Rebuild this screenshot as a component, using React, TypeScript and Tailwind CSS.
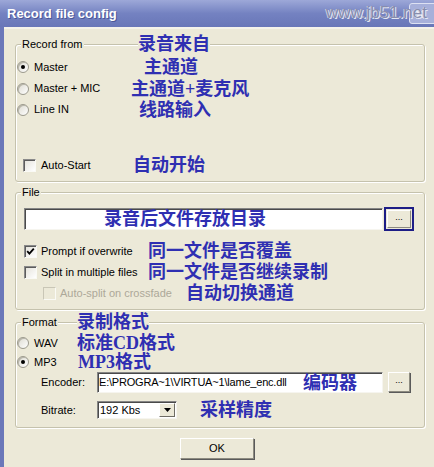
import React from "react";

const NOTE =
  "font-bold text-[18px] leading-none text-[#2f2fb2] [font-family:'Liberation_Serif','Noto_Sans_CJK_SC',serif] whitespace-nowrap";

function Radio({ checked }: { checked?: boolean }) {
  return (
    <span className="w-[12px] h-[12px] shrink-0 rounded-full border border-[#9c9a8e] bg-gradient-to-br from-[#dcdad0] to-white shadow-[inset_1px_1px_0_#b8b6aa] flex items-center justify-center">
      {checked && <span className="w-[4px] h-[4px] rounded-full bg-black" />}
    </span>
  );
}

function Check({ checked, disabled }: { checked?: boolean; disabled?: boolean }) {
  return (
    <span
      className={
        disabled
          ? "w-[13px] h-[13px] shrink-0 border border-t-[#c9c6b6] border-l-[#c9c6b6] border-r-[#fafaf5] border-b-[#fafaf5] bg-[#ECE9D8]"
          : "w-[13px] h-[13px] shrink-0 border border-t-[#8a8a8a] border-l-[#8a8a8a] border-r-[#fafaf5] border-b-[#fafaf5] bg-gradient-to-br from-[#e4e2da] to-white shadow-[inset_1px_1px_0_#5c5c5c] flex items-center justify-center"
      }
    >
      {checked && (
        <svg width="9" height="9" viewBox="0 0 9 9">
          <path d="M1.2 4.2 L3.4 6.6 L7.8 1.6" stroke="#000" strokeWidth="1.8" fill="none" />
        </svg>
      )}
    </span>
  );
}

function Group({
  className,
  header,
  children,
}: {
  className: string;
  header: React.ReactNode;
  children: React.ReactNode;
}) {
  return (
    <div
      className={`w-[410px] border border-[#c5c2ad] rounded-[3px] shadow-[inset_1px_1px_0_#fff,1px_1px_0_#fff] ${className}`}
    >
      <div className="-mt-[13px] h-[24px] flex items-center pl-[5px]">{header}</div>
      {children}
    </div>
  );
}

function SmallButton({ className }: { className: string }) {
  return (
    <div
      className={`bg-[#ECE9D8] border border-t-white border-l-white border-r-[#8d8b80] border-b-[#8d8b80] shadow-[1px_1px_0_#5a5a5a] flex items-center justify-center text-[9px] leading-none pb-[3px] ${className}`}
    >
      ...
    </div>
  );
}

export default function App() {
  return (
    <div className="w-[434px] h-[467px] overflow-hidden bg-[#ECE9D8] flex flex-col [font-family:'Liberation_Sans',Arial,sans-serif] text-[11px] text-black">
      {/* Title bar */}
      <div className="relative h-[27px] shrink-0 bg-gradient-to-b from-[#9da8d8] via-[#7482c1] to-[#6876b8] flex items-center pl-[7px]">
        <span className="text-white font-bold text-[13px] leading-none [text-shadow:1px_1px_0_#4a5698]">
          Record file config
        </span>
        <div className="absolute left-[409px] top-[3px] w-[30px] h-[21px] rounded-[3px] bg-[#a7b0da] border border-[#dde1f2] flex items-center justify-center">
          <svg width="10" height="10" viewBox="0 0 10 10" className="-ml-[8px]">
            <path d="M1 1 L9 9 M9 1 L1 9" stroke="#ffffff" strokeWidth="2" opacity="0.85" />
          </svg>
        </div>
        <span className="absolute right-[7px] top-[3px] text-[17px] leading-[20px] text-[#878dad] [text-shadow:1px_1px_0_#e4e7f3,-1px_0_0_#c9cde6]">
          www.jb51.net
        </span>
      </div>

      <div className="flex flex-1">
        <div className="w-[4px] bg-[#6b78b9] shrink-0" />
        <div className="flex-1 flex flex-col pl-[11px] border-t-2 border-[#f4f2ea]">
          {/* Record from */}
          <Group
            className="mt-[15px]"
            header={
              <>
                <span className="w-[117px] shrink-0">
                  <span className="bg-[#ECE9D8] px-[1px]">Record from</span>
                </span>
                <span className={`${NOTE} bg-[#ECE9D8]`}>录音来自</span>
              </>
            }
          >
            <div className="h-[22px] flex items-center pl-[1px]">
              <span className="w-[127px] shrink-0 flex items-center gap-[5px]">
                <Radio checked />
                <span>Master</span>
              </span>
              <span className={NOTE}>主通道</span>
            </div>
            <div className="h-[21px] flex items-center pl-[1px]">
              <span className="w-[114px] shrink-0 flex items-center gap-[5px]">
                <Radio />
                <span>Master + MIC</span>
              </span>
              <span className={NOTE}>主通道+麦克风</span>
            </div>
            <div className="h-[21px] flex items-center pl-[1px]">
              <span className="w-[122px] shrink-0 flex items-center gap-[5px]">
                <Radio />
                <span>Line IN</span>
              </span>
              <span className={NOTE}>线路输入</span>
            </div>
            <div className="h-[35px]" />
            <div className="h-[20px] flex items-center pl-[7px]">
              <span className="w-[110px] shrink-0 flex items-center gap-[5px]">
                <Check />
                <span>Auto-Start</span>
              </span>
              <span className={NOTE}>自动开始</span>
            </div>
            <div className="h-[6px]" />
          </Group>

          {/* File */}
          <Group
            className="mt-[10px]"
            header={<span className="bg-[#ECE9D8] px-[1px]">File</span>}
          >
            <div className="mt-[3px] h-[24px] flex items-start pl-[8px]">
              <div className="mt-[1px] w-[359px] h-[22px] bg-white border border-t-[#858585] border-l-[#858585] border-r-[#f6f5ef] border-b-[#f6f5ef] shadow-[inset_1px_1px_0_#4a4a4a] flex items-center pl-[79px]">
                <span className={NOTE}>录音后文件存放目录</span>
              </div>
              <div className="ml-[1px] w-[30px] h-[24px] border-2 border-[#1d1d86] p-[1px] flex">
                <SmallButton className="flex-1 shadow-none border-r-[#6e6c64] border-b-[#6e6c64]" />
              </div>
            </div>
            <div className="h-[10px]" />
            <div className="h-[20px] flex items-center pl-[8px]">
              <span className="w-[124px] shrink-0 flex items-center gap-[4px]">
                <Check checked />
                <span>Prompt if overwrite</span>
              </span>
              <span className={NOTE}>同一文件是否覆盖</span>
            </div>
            <div className="h-[22px] flex items-center pl-[8px]">
              <span className="w-[124px] shrink-0 flex items-center gap-[4px]">
                <Check />
                <span>Split in multiple files</span>
              </span>
              <span className={NOTE}>同一文件是否继续录制</span>
            </div>
            <div className="h-[20px] flex items-center pl-[27px]">
              <span className="w-[143px] shrink-0 flex items-center gap-[4px]">
                <Check disabled />
                <span className="text-[#aca899]">Auto-split on crossfade</span>
              </span>
              <span className={NOTE}>自动切换通道</span>
            </div>
            <div className="h-[6px]" />
          </Group>

          {/* Format */}
          <Group
            className="mt-[12px]"
            header={
              <>
                <span className="w-[56px] shrink-0">
                  <span className="bg-[#ECE9D8] px-[1px]">Format</span>
                </span>
                <span className={`${NOTE} bg-[#ECE9D8]`}>录制格式</span>
              </>
            }
          >
            <div className="h-[18px] flex items-center pl-[1px]">
              <span className="w-[60px] shrink-0 flex items-center gap-[5px]">
                <Radio />
                <span>WAV</span>
              </span>
              <span className={NOTE}>标准CD格式</span>
            </div>
            <div className="h-[20px] flex items-center pl-[1px]">
              <span className="w-[61px] shrink-0 flex items-center gap-[5px]">
                <Radio checked />
                <span>MP3</span>
              </span>
              <span className={NOTE}>MP3格式</span>
            </div>
            <div className="h-[21px] flex items-start pl-[25px]">
              <span className="w-[56px] shrink-0 h-[21px] flex items-center">Encoder:</span>
              <div className="w-[286px] h-[21px] bg-white border border-t-[#858585] border-l-[#858585] border-r-[#f6f5ef] border-b-[#f6f5ef] shadow-[inset_1px_1px_0_#4a4a4a] flex items-center pl-[1px]">
                <span className="w-[204px] shrink-0 whitespace-nowrap tracking-[-0.2px]">E:\PROGRA~1\VIRTUA~1\lame_enc.dll</span>
                <span className={NOTE}>编码器</span>
              </div>
              <SmallButton className="ml-[5px] w-[22px] h-[20px]" />
            </div>
            <div className="h-[8px]" />
            <div className="h-[18px] flex items-center pl-[25px]">
              <span className="w-[56px] shrink-0">Bitrate:</span>
              <div className="w-[80px] h-[18px] bg-white border border-t-[#858585] border-l-[#858585] border-r-[#f6f5ef] border-b-[#f6f5ef] shadow-[inset_1px_1px_0_#4a4a4a] flex items-center">
                <span className="flex-1 pl-[2px]">192 Kbs</span>
                <span className="w-[16px] h-[14px] mr-[1px] bg-[#ECE9D8] border border-t-white border-l-white border-r-[#6e6c64] border-b-[#6e6c64] flex items-center justify-center">
                  <svg width="7" height="4" viewBox="0 0 7 4">
                    <path d="M0 0 H7 L3.5 4 Z" fill="#000" />
                  </svg>
                </span>
              </div>
              <span className={`${NOTE} ml-[23px]`}>采样精度</span>
            </div>
            <div className="h-[8px]" />
          </Group>

          <div className="mt-[10px] ml-[165px] w-[74px] h-[21px] bg-[#ECE9D8] border border-t-white border-l-white border-r-[#8d8b80] border-b-[#8d8b80] shadow-[1px_1px_0_#5a5a5a] flex items-center justify-center">
            OK
          </div>
        </div>
      </div>
    </div>
  );
}
